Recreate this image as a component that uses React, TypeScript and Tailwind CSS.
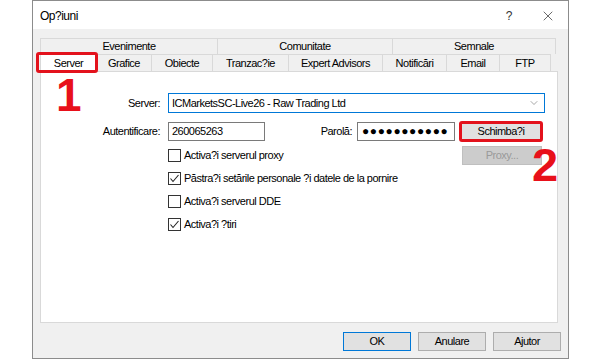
import { ChevronDown, X } from "lucide-react";

const topTabs = [
  { label: "Evenimente", w: "w-[178px]" },
  { label: "Comunitate", w: "w-[176px]" },
  { label: "Semnale", w: "w-[164px]" },
];

const tabs = [
  { label: "Server", w: "w-[57px]", active: true },
  { label: "Grafice", w: "w-[56px]" },
  { label: "Obiecte", w: "w-[62px]" },
  { label: "Tranzac?ie", w: "w-[77px]" },
  { label: "Expert Advisors", w: "w-[95px]" },
  { label: "Notificări", w: "w-[65px]" },
  { label: "Email", w: "w-[54px]" },
  { label: "FTP", w: "w-[52px]" },
];

const options = [
  { label: "Activa?i serverul proxy", checked: false },
  { label: "Păstra?i setările personale ?i datele de la pornire", checked: true },
  { label: "Activa?i serverul DDE", checked: false },
  { label: "Activa?i ?tiri", checked: true },
];

function CheckBox({ checked }: { checked: boolean }) {
  return (
    <div className="w-[13px] h-[13px] border border-[#333] bg-white flex items-center justify-center shrink-0">
      {checked && (
        <svg width="11" height="11" viewBox="0 0 11 11">
          <polyline points="1.5,5.5 4,8.5 9.5,2" fill="none" stroke="#222" strokeWidth="1.1" />
        </svg>
      )}
    </div>
  );
}

export default function App() {
  return (
    <div className="relative w-[600px] h-[360px] bg-white overflow-hidden font-['Liberation_Sans',Arial,sans-serif] text-[11px] tracking-[-0.5px] text-black">
      <div className="ml-[32px] w-[537px] h-[359px] border border-[#8c8c8c] flex flex-col bg-[#f0f0f0]">
        {/* title bar */}
        <div className="h-[28px] bg-white flex items-center pl-[7px] pr-[12px]">
          <span className="text-[12px] mt-[2px]">Op?iuni</span>
          <span className="ml-auto text-[12px] mt-[2px] text-[#333]">?</span>
          <X className="ml-[28px] mt-[1px] w-[16px] h-[16px] text-[#333]" strokeWidth={1.1} />
        </div>

        <div className="flex-1 flex flex-col pl-[7px] pr-[7px] pt-[9px]">
          {/* tab rows */}
          <div className="flex h-[16px]">
            {topTabs.map((t) => (
              <div
                key={t.label}
                className={`${t.w} border-t border-l border-r border-[#d9d9d9] -mr-px flex items-center justify-center bg-[#f0f0f0]`}
              >
                {t.label}
              </div>
            ))}
          </div>
          <div className="flex h-[17px]">
            {tabs.map((t) => (
              <div
                key={t.label}
                className={`${t.w} border-t border-l border-r border-[#d9d9d9] -mr-px flex items-center justify-center ${
                  t.active ? "bg-white relative z-10 h-[18px]" : "bg-[#f0f0f0]"
                }`}
              >
                {t.label}
              </div>
            ))}
          </div>

          {/* panel */}
          <div className="w-[518px] h-[252px] bg-white border border-[#d9d9d9] pt-[21px]">
            <div className="flex items-center h-[20px]">
              <span className="w-[119px] text-right">Server:</span>
              <div className="ml-[8px] w-[377px] h-[20px] border border-[#0078d7] flex items-center pl-[3px] pr-[4px]">
                <span>ICMarketsSC-Live26 - Raw Trading Ltd</span>
                <ChevronDown className="ml-auto w-[12px] h-[12px] text-[#777]" strokeWidth={1.3} />
              </div>
            </div>

            <div className="flex items-center h-[20px] mt-[8px]">
              <span className="w-[119px] text-right">Autentificare:</span>
              <div className="ml-[8px] w-[97px] h-[19px] border border-[#7a7a7a] flex items-center pl-[3px]">
                260065263
              </div>
              <span className="w-[87px] text-right">Parolă:</span>
              <div className="ml-[5px] w-[98px] h-[19px] border border-[#7a7a7a] flex items-center pl-[4px] text-[12px] tracking-[0.6px]">
                ●●●●●●●●●●●
              </div>
              <div className="ml-[4px] w-[84px] h-[21px] border-[3px] border-[#e3121c] rounded-[3px] bg-[#e1e1e1] flex items-center justify-center">
                Schimba?i
              </div>
            </div>

            <div className="mt-[3px] flex flex-col">
              {options.map((o, i) => (
                <div key={o.label} className="flex items-center h-[23px] pl-[127px]">
                  <CheckBox checked={o.checked} />
                  <span className="ml-[3px]">{o.label}</span>
                  {i === 0 && (
                    <div className="ml-auto mr-[15px] w-[80px] h-[19px] bg-[#cccccc] border border-[#bfbfbf] text-[#9a9a9a] flex items-center justify-center">
                      Proxy...
                    </div>
                  )}
                </div>
              ))}
            </div>
          </div>

          {/* buttons */}
          <div className="flex justify-end gap-[7px] mt-[9px]">
            <div className="w-[68px] h-[19px] bg-[#e1e1e1] border border-[#0078d7] flex items-center justify-center">OK</div>
            <div className="w-[68px] h-[19px] bg-[#e1e1e1] border border-[#adadad] flex items-center justify-center">Anulare</div>
            <div className="w-[68px] h-[19px] bg-[#e1e1e1] border border-[#adadad] flex items-center justify-center">Ajutor</div>
          </div>
        </div>
      </div>

      {/* annotations */}
      <div className="absolute left-[36px] top-[52px] w-[62px] h-[21px] border-[3px] border-[#e3121c] rounded-[3px] z-20" />
      <div className="absolute left-[56px] top-[72px] text-[46px] font-bold leading-none tracking-normal text-[#e8101a] z-20">1</div>
      <div className="absolute left-[532px] top-[141px] text-[47px] font-bold leading-none tracking-normal text-[#e8101a] z-20">2</div>
    </div>
  );
}
